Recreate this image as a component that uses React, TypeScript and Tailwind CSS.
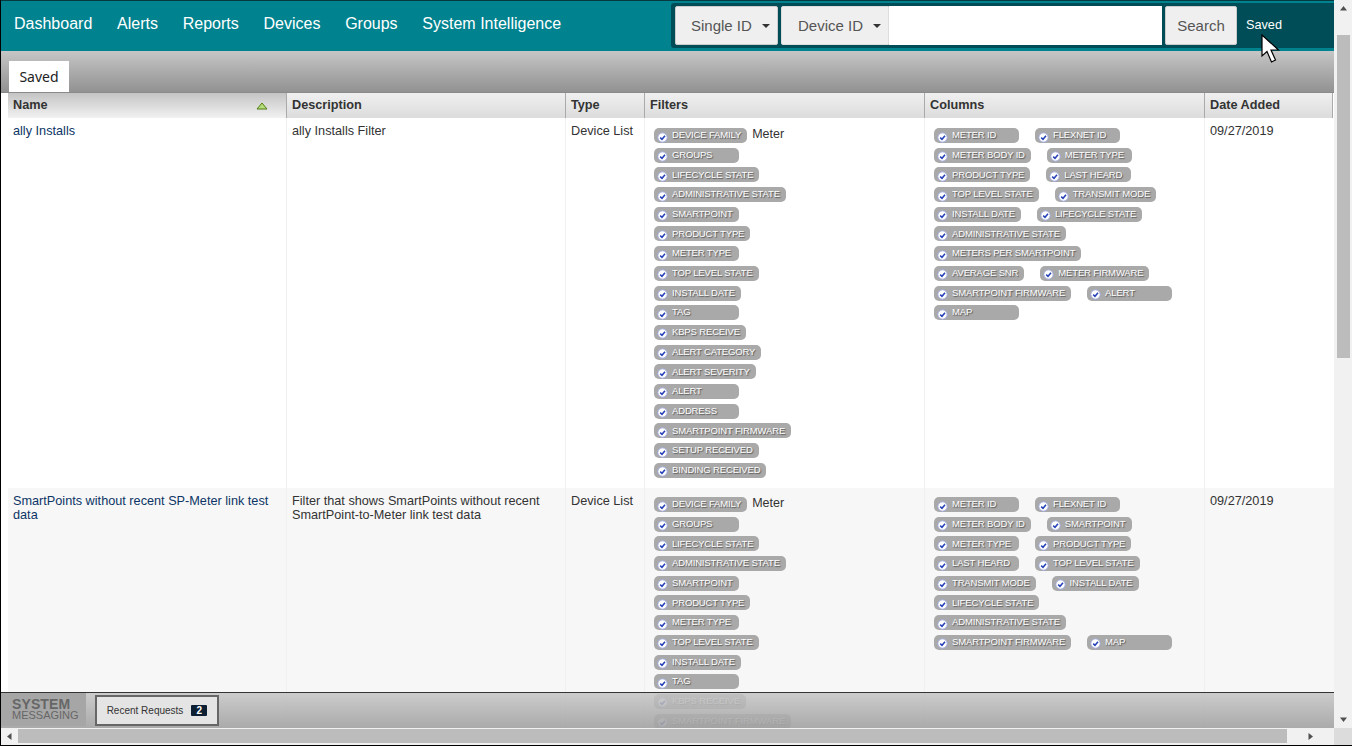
const NAV = ["Dashboard", "Alerts", "Reports", "Devices", "Groups", "System Intelligence"];

const COL_WIDTHS = ["w-[279px]", "w-[279px]", "w-[79px]", "w-[280px]", "w-[280px]", "w-[128px]"];

const ROW1_FILTERS = [
  "DEVICE FAMILY", "GROUPS", "LIFECYCLE STATE", "ADMINISTRATIVE STATE", "SMARTPOINT", "PRODUCT TYPE",
  "METER TYPE", "TOP LEVEL STATE", "INSTALL DATE", "TAG", "KBPS RECEIVE", "ALERT CATEGORY",
  "ALERT SEVERITY", "ALERT", "ADDRESS", "SMARTPOINT FIRMWARE", "SETUP RECEIVED", "BINDING RECEIVED",
];
const ROW1_COLUMNS = [
  "METER ID", "FLEXNET ID", "METER BODY ID", "METER TYPE", "PRODUCT TYPE", "LAST HEARD", "TOP LEVEL STATE",
  "TRANSMIT MODE", "INSTALL DATE", "LIFECYCLE STATE", "ADMINISTRATIVE STATE", "METERS PER SMARTPOINT",
  "AVERAGE SNR", "METER FIRMWARE", "SMARTPOINT FIRMWARE", "ALERT", "MAP",
];
const ROW2_FILTERS = [
  "DEVICE FAMILY", "GROUPS", "LIFECYCLE STATE", "ADMINISTRATIVE STATE", "SMARTPOINT", "PRODUCT TYPE",
  "METER TYPE", "TOP LEVEL STATE", "INSTALL DATE", "TAG", "KBPS RECEIVE", "SMARTPOINT FIRMWARE",
];
const ROW2_COLUMNS = [
  "METER ID", "FLEXNET ID", "METER BODY ID", "SMARTPOINT", "METER TYPE", "PRODUCT TYPE", "LAST HEARD",
  "TOP LEVEL STATE", "TRANSMIT MODE", "INSTALL DATE", "LIFECYCLE STATE", "ADMINISTRATIVE STATE",
  "SMARTPOINT FIRMWARE", "MAP",
];

function Pill({ label }: { label: string }) {
  return (
    <span className="flex h-[15px] min-w-[85px] items-center whitespace-nowrap rounded-[5px] bg-[#a9a9a9] pl-[3px] pr-[6px] text-[9.5px] leading-none tracking-[-0.15px] text-white [text-shadow:1px_1px_1px_#555]">
      <svg width="11" height="11" viewBox="0 0 11 11" className="mr-[4px] mt-[3px] shrink-0">
        <circle cx="5.5" cy="5.5" r="4.7" fill="#fff" stroke="#9fa8d8" strokeWidth="1" />
        <path d="M3.2 5.6 L5 7.3 L8 3.8" fill="none" stroke="#2340b8" strokeWidth="1.5" />
      </svg>
      <span className="-mt-[1px]">{label}</span>
    </span>
  );
}

function FilterList({ items }: { items: string[] }) {
  return (
    <div className="flex flex-col items-start gap-y-[4.7px] pl-[9px]">
      {items.map((item, i) => (
        <div key={item} className="flex items-start">
          <Pill label={item} />
          {i === 0 && <span className="ml-[5px] text-[12.5px] leading-[13px] text-[#333]">Meter</span>}
        </div>
      ))}
    </div>
  );
}

function ColumnList({ items }: { items: string[] }) {
  return (
    <div className="ml-[9px] flex w-[247px] flex-wrap gap-x-[16px] gap-y-[4.7px]">
      {items.map((item) => (
        <Pill key={item} label={item} />
      ))}
    </div>
  );
}

function Row({
  name,
  description,
  filters,
  columns,
  className,
  listTop,
}: {
  name: string;
  description: string;
  filters: string[];
  columns: string[];
  className: string;
  listTop: string;
}) {
  return (
    <div className={`flex text-[12.7px] leading-[14px] ${className}`}>
      <div className={`${COL_WIDTHS[0]} border-r border-[#f0f0f0] pl-[5px] pr-[8px] pt-[6px] text-[#0c3566]`}>{name}</div>
      <div className={`${COL_WIDTHS[1]} border-r border-[#f0f0f0] pl-[5px] pr-[8px] pt-[6px] text-[#333]`}>{description}</div>
      <div className={`${COL_WIDTHS[2]} border-r border-[#f0f0f0] pl-[5px] pt-[6px] text-[#333]`}>Device List</div>
      <div className={`${COL_WIDTHS[3]} border-r border-[#f0f0f0] ${listTop}`}>
        <FilterList items={filters} />
      </div>
      <div className={`${COL_WIDTHS[4]} border-r border-[#f0f0f0] ${listTop}`}>
        <ColumnList items={columns} />
      </div>
      <div className={`${COL_WIDTHS[5]} pl-[5px] pt-[6px] text-[#333]`}>09/27/2019</div>
    </div>
  );
}

function HeaderCell({ label, width, sorted }: { label: string; width: string; sorted?: boolean }) {
  return (
    <div
      className={`flex items-center justify-between border-r border-[#aaa] bg-gradient-to-b pl-[5px] pr-[18px] pt-[1px] text-[12.7px] font-bold text-[#333] ${width} ${
        sorted ? "from-[#c4c4c4] to-[#f2f2f2]" : "from-[#f0f0f0] to-[#dcdcdc]"
      }`}
    >
      {label}
      {sorted && (
        <svg width="12" height="8" viewBox="0 0 12 8">
          <path d="M6 1 L11 7 L1 7 Z" fill="#b6dc7a" stroke="#4f7d12" strokeWidth="1" />
        </svg>
      )}
    </div>
  );
}

function Caret() {
  return <span className="ml-[10px] h-0 w-0 border-x-[4px] border-t-[4px] border-x-transparent border-t-[#333]" />;
}

function ScrollArrow({ d }: { d: string }) {
  return (
    <svg width="9" height="9" viewBox="0 0 9 9">
      <path d={d} fill="#505050" />
    </svg>
  );
}

export default function App() {
  return (
    <div className="flex h-[746px] w-[1352px] flex-col overflow-hidden border-b border-l border-black bg-white font-['Liberation_Sans',Arial,sans-serif]">
      <div className="flex min-h-0 flex-1">
        <div className="relative flex min-w-0 flex-1 flex-col">
          {/* Top nav */}
          <header className="flex h-[51px] shrink-0 items-center justify-between border-t border-[#063a40] bg-[#01838f]">
            <nav className="-mt-[5px] flex gap-[24.75px] pl-[13px] text-[16px] text-white">
              {NAV.map((item) => (
                <a key={item}>{item}</a>
              ))}
            </nav>
            <div className="-mt-[1px] flex h-[45px] w-[663px] items-center rounded-l-[3px] bg-[#004d57] pl-[4px]">
              <button className="flex h-[39px] w-[103px] items-center rounded-[2px] border border-[#ccc] bg-[#efefef] pl-[15px] pt-[1px] text-[15px] text-[#555]">
                Single ID
                <Caret />
              </button>
              <button className="ml-[3px] flex h-[39px] w-[108px] items-center rounded-l-[2px] border border-[#ddd] bg-[#efefef] pl-[16px] pt-[1px] text-[15px] text-[#555]">
                Device ID
                <Caret />
              </button>
              <div className="h-[39px] w-[273px] bg-white" />
              <button className="ml-[3px] h-[39px] w-[72px] rounded-[2px] border border-[#ccc] bg-[#efefef] pt-[1px] text-[15px] text-[#555]">Search</button>
              <span className="ml-[9px] mt-[1px] text-[12.7px] text-white">Saved</span>
            </div>
          </header>

          {/* Tab strip */}
          <div className="flex h-[42px] shrink-0 items-end border-b border-[#8a8a8a] bg-gradient-to-b from-[#c6c6c6] to-[#929292] pl-[8px]">
            <div className="flex h-[31px] w-[60px] items-center justify-center bg-white font-['Noto_Sans',sans-serif] text-[14px] text-[#222]">Saved</div>
          </div>

          {/* Table */}
          <div className="min-h-0 flex-1 overflow-hidden pl-[7px]">
            <div className="flex h-[25px]">
              <HeaderCell label="Name" width={COL_WIDTHS[0]} sorted />
              <HeaderCell label="Description" width={COL_WIDTHS[1]} />
              <HeaderCell label="Type" width={COL_WIDTHS[2]} />
              <HeaderCell label="Filters" width={COL_WIDTHS[3]} />
              <HeaderCell label="Columns" width={COL_WIDTHS[4]} />
              <HeaderCell label="Date Added" width={COL_WIDTHS[5]} />
            </div>
            <Row
              name="ally Installs"
              description="ally Installs Filter"
              filters={ROW1_FILTERS}
              columns={ROW1_COLUMNS}
              className="h-[370px] bg-white"
              listTop="pt-[10px]"
            />
            <Row
              name="SmartPoints without recent SP-Meter link test data"
              description="Filter that shows SmartPoints without recent SmartPoint-to-Meter link test data"
              filters={ROW2_FILTERS}
              columns={ROW2_COLUMNS}
              className="bg-[#f7f7f7]"
              listTop="pt-[9px]"
            />
          </div>

          {/* System messaging bar sits over the table */}
          <div className="absolute bottom-0 left-0 right-0 flex h-[36px] items-start border-t border-[#333] bg-gradient-to-b from-[#c4c4c4d9] to-[#a2a2a2e6]">
            <div className="flex h-[33px] w-[85px] flex-col bg-[#a6a6a6] pl-[11px] pt-[6px] text-[#666]">
              <span className="text-[14px] font-bold leading-[10px] tracking-[0.1px]">SYSTEM</span>
              <span className="mt-[1px] text-[11px] leading-[10px]">MESSAGING</span>
            </div>
            <button className="ml-[9px] mt-[2px] flex h-[31px] w-[124px] items-center justify-center border-2 border-[#666] bg-[#e4e4e4] text-[10px] text-[#333]">
              Recent Requests
              <span className="ml-[8px] h-[11px] w-[16px] rounded-[1px] bg-[#0c1f33] text-center text-[10px] font-bold leading-[11px] text-white">2</span>
            </button>
          </div>

          {/* Mouse cursor */}
          <svg className="absolute left-[1260px] top-[34px]" width="20" height="31" viewBox="0 0 20 31">
            <path d="M1 1 L1 22 L6 17.5 L10.5 28 L14.5 26 L10 16 L17.5 16 Z" fill="#fff" stroke="#000" strokeWidth="1.2" />
          </svg>
        </div>

        {/* Vertical scrollbar */}
        <div className="flex w-[18px] shrink-0 flex-col items-center bg-[#f1f1f1]">
          <div className="flex h-[17px] items-center"><ScrollArrow d="M4.5 2 L8 6.5 L1 6.5 Z" /></div>
          <div className="mt-[18px] h-[323px] w-[13px] bg-[#bcbcbc]" />
          <div className="flex-1" />
          <div className="flex h-[17px] items-center"><ScrollArrow d="M1 2.5 L8 2.5 L4.5 7 Z" /></div>
        </div>
      </div>

      {/* Horizontal scrollbar */}
      <div className="flex h-[17px] shrink-0 bg-[#f1f1f1]">
        <div className="flex w-[17px] items-center justify-center"><ScrollArrow d="M2 4.5 L6.5 1 L6.5 8 Z" /></div>
        <div className="mb-[2px] mt-[1px] w-[1269px] bg-[#bcbcbc]" />
        <div className="flex flex-1 items-center justify-center"><ScrollArrow d="M2.5 1 L7 4.5 L2.5 8 Z" /></div>
        <div className="w-[18px] bg-[#dcdcdc]" />
      </div>
    </div>
  );
}
